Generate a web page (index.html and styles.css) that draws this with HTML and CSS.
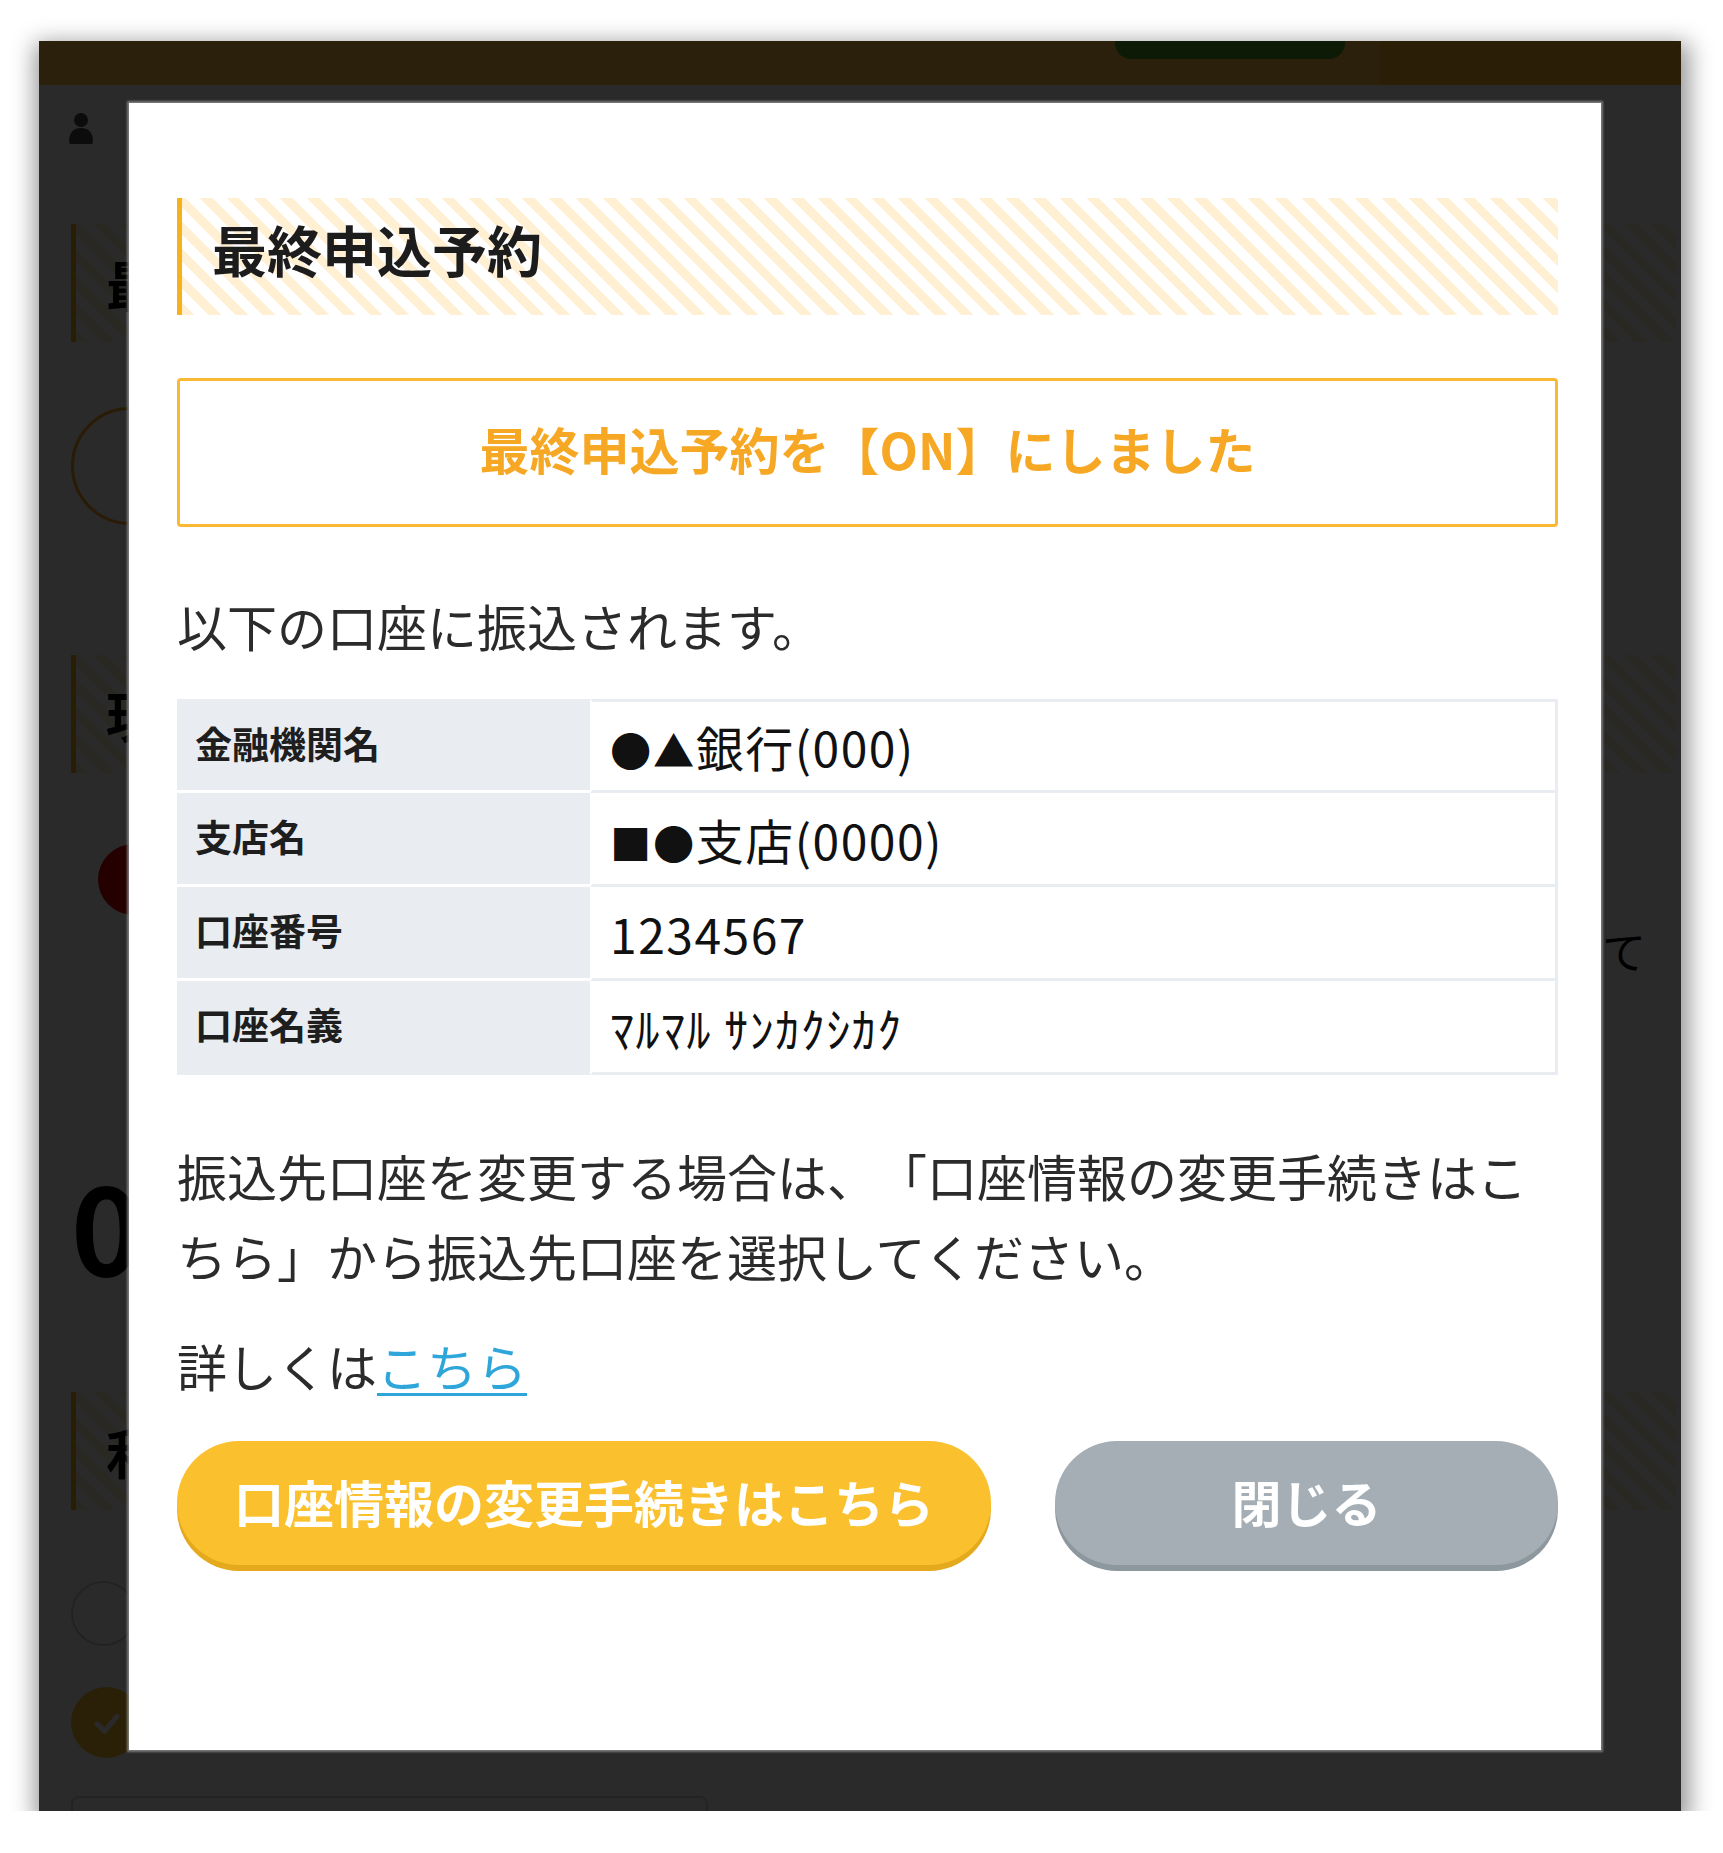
FILE: index.html
```html
<!DOCTYPE html>
<html lang="ja">
<head>
<meta charset="utf-8">
<title>最終申込予約</title>
<link rel="stylesheet" href="styles.css">
</head>
<body>
<div class="screen">
  <div class="page">
    <header class="topbar">
      <span class="topbar-btn"></span>
      <span class="topbar-spacer"></span>
      <span class="topbar-right"></span>
    </header>
    <div class="page-body">
      <svg class="user-icon" viewBox="0 0 26 32" aria-hidden="true">
        <circle cx="13" cy="8" r="7" fill="#4a4a4a"/>
        <path d="M1 30 C1 20 6 16 13 16 C20 16 25 20 25 30 Q25 32 23 32 L3 32 Q1 32 1 30 Z" fill="#4a4a4a"/>
      </svg>
      <div class="bg-heading">最</div>
      <div class="bg-ring"></div>
      <div class="bg-heading bg-heading-2">現</div>
      <div class="bg-row">
        <span class="bg-dot"></span>
        <span class="bg-text">て</span>
      </div>
      <div class="bg-big">0</div>
      <div class="bg-heading bg-heading-3">利</div>
      <div class="bg-ring-small"></div>
      <div class="bg-check">
        <svg viewBox="0 0 24 24" aria-hidden="true"><path d="M6 12.5 L10.5 17 L18 8" fill="none" stroke="#fff" stroke-width="3" stroke-linecap="round" stroke-linejoin="round"/></svg>
      </div>
      <div class="bg-box"></div>
    </div>
  </div>
  <div class="overlay"></div>
  <div class="modal">
    <h2 class="modal-title">最終申込予約</h2>
    <div class="notice">最終申込予約を【ON】にしました</div>
    <p class="text lead">以下の口座に振込されます。</p>
    <table class="account">
      <tr><th>金融機関名</th><td><span class="sym">●▲</span>銀行(000)</td></tr>
      <tr><th>支店名</th><td><span class="sym">■●</span>支店(0000)</td></tr>
      <tr><th>口座番号</th><td>1234567</td></tr>
      <tr><th>口座名義</th><td>ﾏﾙﾏﾙ ｻﾝｶｸｼｶｸ</td></tr>
    </table>
    <p class="text note">振込先口座を変更する場合は、「口座情報の変更手続きはこちら」から振込先口座を選択してください。</p>
    <p class="text detail">詳しくは<a class="link" href="#">こちら</a></p>
    <div class="actions">
      <button class="btn btn-primary">口座情報の変更手続きはこちら</button>
      <button class="btn btn-close">閉じる</button>
    </div>
  </div>
</div>
</body>
</html>
```
FILE: styles.css
```css
html, body {
  margin: 0;
  padding: 0;
  background: #ffffff;
}

body {
  font-family: "Noto Sans CJK JP", "Noto Sans", sans-serif;
  padding: 41px 0 0 39px;
}

.screen {
  position: relative;
  width: 1642px;
  height: 1770px;
  overflow: hidden;
  background: #ffffff;
  box-shadow: 2px 8px 22px 6px rgba(0, 0, 0, 0.42);
}

/* ---------- underlying page ---------- */
.page {
  display: flex;
  flex-direction: column;
}

.topbar {
  height: 44px;
  background: #ffc249;
  display: flex;
  align-items: flex-start;
  padding-left: 1076px;
}

.topbar-btn {
  width: 230px;
  height: 18px;
  background: #4a9d24;
  border-radius: 0 0 16px 16px;
}

.topbar-spacer {
  flex: 1;
}

.topbar-right {
  width: 301px;
  height: 44px;
  background: #ffb42e;
}

.page-body {
  display: flex;
  flex-direction: column;
  align-items: flex-start;
  padding: 0 5px 0 32px;
}

.user-icon {
  width: 26px;
  height: 32px;
  margin: 27px 0 0 -3px;
}

.bg-heading {
  align-self: stretch;
  height: 118px;
  margin-top: 80px;
  border-left: 5px solid #f5b614;
  padding-left: 30px;
  display: flex;
  align-items: center;
  font-size: 54px;
  font-weight: 700;
  color: #000;
  background: repeating-linear-gradient(45deg, #fff0d2 0 9px, #ffffff 9px 19px);
}

.bg-heading-2 {
  margin-top: 130px;
}

.bg-heading-3 {
  margin-top: 108px;
}

.bg-ring {
  width: 112px;
  height: 112px;
  margin-top: 65px;
  border: 3px solid #f5a623;
  border-radius: 50%;
}

.bg-row {
  align-self: stretch;
  height: 71px;
  margin-top: 71px;
  display: flex;
  align-items: flex-start;
}

.bg-dot {
  width: 71px;
  height: 71px;
  margin-left: 27px;
  border-radius: 50%;
  background: #d80000;
}

.bg-text {
  margin-left: auto;
  margin-right: 30px;
  margin-top: 80px;
  font-size: 44px;
  line-height: 52px;
  color: #000;
  white-space: nowrap;
}

.bg-big {
  margin-top: 249px;
  font-size: 120px;
  line-height: 120px;
  font-weight: 700;
  color: #000;
}

.bg-ring-small {
  width: 61px;
  height: 61px;
  margin-top: 71px;
  border: 2px solid #cfcfcf;
  border-radius: 50%;
}

.bg-check {
  width: 71px;
  height: 71px;
  margin-top: 41px;
  border-radius: 50%;
  background: #f5c12e;
  display: flex;
  align-items: center;
  justify-content: center;
}

.bg-check svg {
  width: 40px;
  height: 40px;
}

.bg-box {
  width: 633px;
  height: 80px;
  margin-top: 38px;
  border: 2px solid #d6d6d6;
  border-radius: 8px;
}

.overlay {
  position: absolute;
  inset: 0;
  background: rgba(0, 0, 0, 0.835);
}

/* ---------- modal ---------- */
.modal {
  position: absolute;
  left: 90px;
  top: 62px;
  width: 1472px;
  box-sizing: border-box;
  padding: 95px 43px 185px 48px;
  background: #ffffff;
  box-shadow: 0 0 2px 2px rgba(150, 150, 150, 0.75);
  color: #2b2b2b;
  text-spacing-trim: space-all;
}

.modal-title {
  margin: 0;
  height: 117px;
  box-sizing: border-box;
  border-left: 5px solid #f7b21b;
  padding: 0 0 18px 30px;
  display: flex;
  align-items: center;
  font-size: 55px;
  font-weight: 700;
  color: #1c1c1c;
  background: repeating-linear-gradient(45deg, #fff0d4 0 9px, #ffffff 9px 19px);
}

.notice {
  margin-top: 63px;
  height: 149px;
  box-sizing: border-box;
  border: 3px solid #f9b934;
  border-radius: 4px;
  padding-bottom: 10px;
  display: flex;
  align-items: center;
  justify-content: center;
  font-size: 50px;
  font-weight: 700;
  color: #f6a723;
}

.text {
  margin: 0;
  font-size: 50px;
  line-height: 80px;
  color: #2b2b2b;
}

.lead {
  margin-top: 58px;
}

.account {
  margin-top: 34px;
  width: 100%;
  border-collapse: separate;
  border-spacing: 0;
}

.account th,
.account td {
  height: 94px;
  box-sizing: border-box;
  vertical-align: middle;
  padding: 0;
}

.account th {
  width: 413px;
  background: #e9edf2;
  border-bottom: 3px solid #ffffff;
  padding-left: 18px;
  padding-bottom: 6px;
  text-align: left;
  font-size: 37px;
  font-weight: 700;
  color: #1e1e1e;
}

.account tr:first-child th,
.account tr:first-child td {
  border-top: 3px solid #e9edf2;
}

.account tr:last-child th {
  border-bottom: 3px solid #e9edf2;
}

.account td {
  padding-left: 17px;
  border-bottom: 3px solid #e9edf2;
  border-right: 3px solid #e9edf2;
  border-left: 3px solid #ffffff;
  font-size: 48px;
  font-weight: 400;
  letter-spacing: 1.5px;
  color: #111111;
}

.sym {
  font-size: 0.86em;
  letter-spacing: 0.04em;
}

.note {
  margin-top: 60px;
}

.detail {
  margin-top: 30px;
}

.link {
  color: #2ea6da;
  text-decoration: underline;
  text-decoration-thickness: 3px;
  text-underline-offset: 6px;
}

.actions {
  margin-top: 36px;
  display: grid;
  grid-template-columns: 812fr 502fr;
  column-gap: 64px;
}

.btn {
  height: 124px;
  border: 0;
  border-radius: 62px;
  font-family: "Noto Sans CJK JP", "Noto Sans", sans-serif;
  font-size: 50px;
  font-weight: 700;
  color: #ffffff;
  padding: 0 0 4px;
  cursor: pointer;
}

.btn-primary {
  background: #fbc02d;
  box-shadow: 0 6px 0 #e5a91d;
}

.btn-close {
  background: #a4aeb4;
  box-shadow: 0 6px 0 #8d989e;
}
```
